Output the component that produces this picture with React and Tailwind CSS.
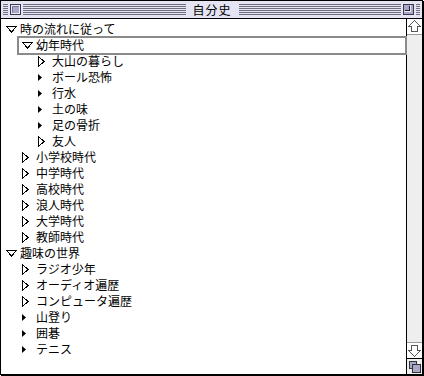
import React from "react";

const ROWS = [
  { label: "時の流れに従って", level: 0, kind: "open" },
  { label: "幼年時代", level: 1, kind: "open", selected: true },
  { label: "大山の暮らし", level: 2, kind: "closed" },
  { label: "ボール恐怖", level: 2, kind: "leaf" },
  { label: "行水", level: 2, kind: "leaf" },
  { label: "土の味", level: 2, kind: "leaf" },
  { label: "足の骨折", level: 2, kind: "leaf" },
  { label: "友人", level: 2, kind: "closed" },
  { label: "小学校時代", level: 1, kind: "closed" },
  { label: "中学時代", level: 1, kind: "closed" },
  { label: "高校時代", level: 1, kind: "closed" },
  { label: "浪人時代", level: 1, kind: "closed" },
  { label: "大学時代", level: 1, kind: "closed" },
  { label: "教師時代", level: 1, kind: "closed" },
  { label: "趣味の世界", level: 0, kind: "open" },
  { label: "ラジオ少年", level: 1, kind: "closed" },
  { label: "オーディオ遍歴", level: 1, kind: "closed" },
  { label: "コンピュータ遍歴", level: 1, kind: "closed" },
  { label: "山登り", level: 1, kind: "leaf" },
  { label: "囲碁", level: 1, kind: "leaf" },
  { label: "テニス", level: 1, kind: "leaf" },
];

const INDENT = ["pl-[5px]", "pl-[21px]", "pl-[37px]"];

function Twisty({ kind }) {
  if (kind === "open")
    return (
      <svg width="11" height="7" viewBox="0 0 11 7">
        <path d="M0.5 0.5H10.5L5.5 6Z" fill="white" stroke="black" strokeWidth="1" shapeRendering="crispEdges" />
      </svg>
    );
  if (kind === "closed")
    return (
      <svg width="7" height="11" viewBox="0 0 7 11">
        <path d="M0.5 0.5L6 5.5L0.5 10.5Z" fill="white" stroke="black" strokeWidth="1" shapeRendering="crispEdges" />
      </svg>
    );
  return (
    <svg width="5" height="9" viewBox="0 0 5 9">
      <path d="M0 1L4 4.5L0 8Z" fill="black" />
    </svg>
  );
}

function Stripes({ className }) {
  return (
    <div className={"h-[11px] bg-[repeating-linear-gradient(to_bottom,#6e6e80_0px,#6e6e80_1px,#e4e4f2_1px,#e4e4f2_2px)] " + className} />
  );
}

function CloseBox() {
  return (
    <div className="w-[11px] h-[11px] border border-[#3a3a4a] bg-[#e8e8f8] p-[1px] shrink-0">
      <div className="w-full h-full bg-[#a8a8c8] border-l border-t border-l-[#7878a0] border-t-[#7878a0]" />
    </div>
  );
}

function ZoomBox() {
  return (
    <div className="w-[11px] h-[11px] border border-[#3a3a4a] bg-[#a8a8c8] shrink-0 relative">
      <svg width="9" height="9" viewBox="0 0 9 9" className="absolute left-0 top-0">
        <path d="M5.5 0.5V5.5H0.5" fill="none" stroke="#222" strokeWidth="1" shapeRendering="crispEdges" />
        <path d="M6.5 0V6.5H0" fill="none" stroke="#e8e8f8" strokeWidth="1" shapeRendering="crispEdges" />
      </svg>
    </div>
  );
}

function Arrow({ down }) {
  return (
    <svg width="13" height="13" viewBox="0 0 13 13" className={down ? "rotate-180" : ""}>
      <path d="M6.5 0.5L12.5 6.5H9.5V11.5H3.5V6.5H0.5Z" fill="white" stroke="#555" strokeWidth="1" shapeRendering="crispEdges" />
    </svg>
  );
}

export default function App() {
  return (
    <div className="w-[424px] h-[376px] bg-white font-['Noto_Sans_CJK_JP','Noto_Sans_CJK_SC',sans-serif] text-black">
      <div className="w-[423px] h-[375px] border border-black shadow-[1px_1px_0_0_#000] flex flex-col bg-white">
        {/* title bar */}
        <div className="h-[18px] shrink-0 border-b border-black bg-[#e4e4f2] flex items-center px-[2px] gap-[2px]">
          <Stripes className="w-[5px]" />
          <CloseBox />
          <Stripes className="flex-1" />
          <div className="px-[5px] text-[12px] leading-[16px] tracking-[1px]">自分史</div>
          <Stripes className="flex-1" />
          <ZoomBox />
          <Stripes className="w-[4px]" />
        </div>

        <div className="flex-1 flex min-h-0">
          {/* outline list */}
          <div className="flex-1 pt-[2px] text-[12px] leading-[16px]">
            {ROWS.map((r) => (
              <div key={r.label} className={"h-[16px] flex items-center relative " + INDENT[r.level]}>
                {r.selected && (
                  <div className="absolute left-[16px] right-[-1px] top-[-1px] bottom-[-2px] border-2 border-[#8a8a8a]" />
                )}
                <div className="w-[14px] flex items-center">
                  <Twisty kind={r.kind} />
                </div>
                <span className="whitespace-nowrap">{r.label}</span>
              </div>
            ))}
          </div>

          {/* scrollbar */}
          <div className="w-[16px] shrink-0 border-l border-black flex flex-col bg-[#eeeeee]">
            <div className="h-[16px] bg-white border-b border-[#999] flex items-center justify-center">
              <Arrow />
            </div>
            <div className="flex-1" />
            <div className="h-[16px] bg-white border-t border-[#999] flex items-center justify-center">
              <Arrow down />
            </div>
            <div className="h-[16px] border-t border-black bg-[#eeeeee] flex items-center justify-center">
              <svg width="12" height="12" viewBox="0 0 12 12">
                <rect x="0.5" y="0.5" width="7" height="7" fill="#a8a8c8" stroke="#333" shapeRendering="crispEdges" />
                <rect x="3.5" y="3.5" width="8" height="8" fill="#a8a8c8" stroke="#333" shapeRendering="crispEdges" />
              </svg>
            </div>
          </div>
        </div>
      </div>
    </div>
  );
}
